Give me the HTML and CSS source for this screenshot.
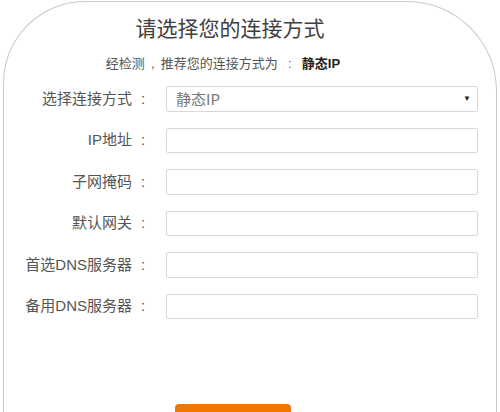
FILE: index.html
```html
<!DOCTYPE html>
<html lang="zh-CN">
<head>
<meta charset="utf-8">
<title>请选择您的连接方式</title>
<link rel="stylesheet" href="styles.css">
</head>
<body>
<div class="card">
  <h1 class="title">请选择您的连接方式</h1>
  <p class="subtitle">经检测<span class="punct">,</span>推荐您的连接方式为<span class="punct wide">:</span><b>静态IP</b></p>
  <div class="form">
    <label class="label">选择连接方式<span class="colon">:</span></label>
    <div class="field select"><span class="value">静态IP</span><span class="arrow">▼</span></div>
    <label class="label">IP地址<span class="colon">:</span></label>
    <div class="field"></div>
    <label class="label">子网掩码<span class="colon">:</span></label>
    <div class="field"></div>
    <label class="label">默认网关<span class="colon">:</span></label>
    <div class="field"></div>
    <label class="label">首选DNS服务器<span class="colon">:</span></label>
    <div class="field"></div>
    <label class="label">备用DNS服务器<span class="colon">:</span></label>
    <div class="field"></div>
  </div>
  <div class="actions"><button class="btn" aria-label="下一步"></button></div>
</div>
</body>
</html>
```
FILE: styles.css
```css
html, body {
  margin: 0;
  padding: 0;
  background: #fff;
  overflow: hidden;
  height: 412px;
}
body {
  font-family: "Liberation Sans", "Noto Sans CJK SC", sans-serif;
  color: #555;
}
.card {
  margin: 1px 3px 0 3px;
  height: 460px;
  border: 1.5px solid #c9c9c9;
  border-bottom: none;
  border-radius: 82px 90px 0 0;
  box-sizing: border-box;
  padding-top: 12px;
}
.title {
  margin: 0;
  font-size: 21px;
  line-height: 30px;
  font-weight: normal;
  color: #404040;
  text-align: center;
  padding-right: 40px;
}
.subtitle {
  margin: 10px 0 0 0;
  font-size: 13px;
  line-height: 20px;
  color: #555;
  text-align: center;
  padding-right: 54px;
}
.punct {
  display: inline-block;
  width: 16px;
  text-align: center;
}
.punct.wide {
  width: 24px;
}
.subtitle b {
  color: #222;
  font-weight: bold;
}
.form {
  display: grid;
  grid-template-columns: 148px 312px;
  column-gap: 14px;
  row-gap: 16px;
  grid-auto-rows: 25.5px;
  margin-top: 12px;
}
.label {
  font-size: 15px;
  color: #555;
  text-align: right;
  align-self: center;
  line-height: 20px;
  white-space: nowrap;
}
.colon {
  display: inline-block;
  width: 18px;
  text-align: center;
  padding-left: 2px;
}
.field {
  border: 1.5px solid #d8d8d8;
  border-radius: 2px;
  box-sizing: border-box;
  background: #fff;
}
.select {
  display: flex;
  align-items: center;
  justify-content: space-between;
  padding: 0 6px 0 9px;
}
.value {
  font-family: "Noto Sans CJK SC", sans-serif;
  font-size: 15px;
  color: #777;
}
.arrow {
  font-size: 8px;
  color: #222;
}
.actions {
  display: flex;
  padding-left: 171px;
  margin-top: 85px;
}
.btn {
  width: 116px;
  height: 36px;
  border: none;
  border-radius: 4px;
  background: #ef7600;
}
```
